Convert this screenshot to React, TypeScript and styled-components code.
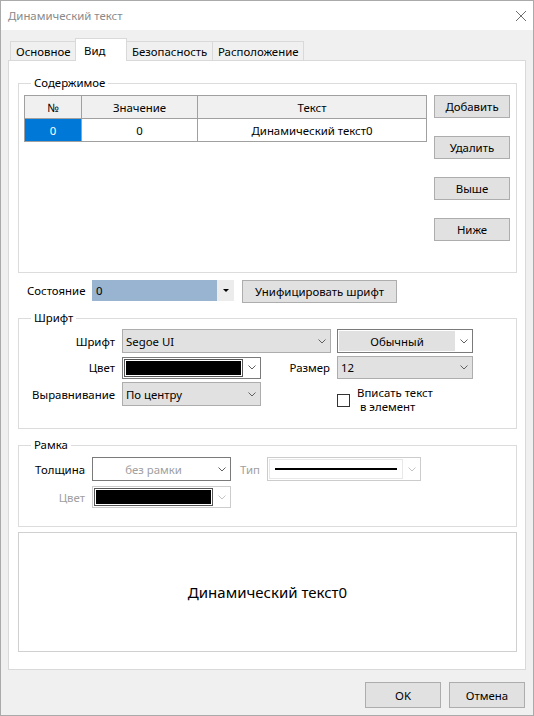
import React from "react";
import styled, { createGlobalStyle } from "styled-components";

const GlobalStyle = createGlobalStyle`
  * {
    box-sizing: border-box;
  }
  html,
  body {
    margin: 0;
    padding: 0;
    background: #ffffff;
  }
  body {
    font-family: "Noto Sans", "Liberation Sans", sans-serif;
    font-size: 11.4px;
    color: #000;
  }
`;

// окно диалога
const Window = styled.div`
  width: 534px;
  height: 716px;
  display: flex;
  flex-direction: column;
  border: 1px solid #aaaaaa;
  background: #f0f0f0;
`;

const TitleBar = styled.div`
  flex-shrink: 0;
  height: 29px;
  display: flex;
  align-items: center;
  justify-content: space-between;
  padding: 0 7px 0 7px;
  background: #ffffff;
  color: #8a8a8a;
`;

const Body = styled.div`
  flex: 1;
  display: flex;
  flex-direction: column;
  padding: 8px 7px 0;
`;

// вкладки
const TabStrip = styled.div`
  display: flex;
  align-items: flex-end;
  height: 22px;
  padding-left: 2px;
`;

const Tab = styled.div<{ $active?: boolean; $w: number }>`
  position: relative;
  z-index: ${(p) => (p.$active ? 1 : 0)};
  width: ${(p) => p.$w}px;
  height: ${(p) => (p.$active ? 23 : 19)}px;
  margin-bottom: ${(p) => (p.$active ? -1 : 0)}px;
  margin-left: -1px;
  padding-left: ${(p) => (p.$active ? 8 : 5)}px;
  display: flex;
  align-items: center;
  border: 1px solid #d9d9d9;
  border-bottom: none;
  background: ${(p) => (p.$active ? "#ffffff" : "#f0f0f0")};
  white-space: nowrap;

  &:first-child {
    margin-left: 0;
  }
`;

const Pane = styled.div`
  height: 610px;
  display: flex;
  flex-direction: column;
  gap: 7px;
  padding: 14px 8px 0 9px;
  background: #ffffff;
  border: 1px solid #d9d9d9;
`;

// рамка группы
const Group = styled.fieldset<{ $h: number; $shift?: number }>`
  height: ${(p) => p.$h}px;
  min-width: 0;
  margin: ${(p) => p.$shift ?? 0}px 0 0;
  padding: 0;
  border: 1px solid #dcdcdc;
`;

const Legend = styled.legend`
  margin-left: 12px;
  padding: 0 3px;
  line-height: 16px;
`;

// содержимое
const ContentRow = styled.div`
  display: flex;
  align-items: flex-start;
  gap: 7px;
  padding: 4px 6px 0 5px;
`;

const TableGrid = styled.div`
  width: 403px;
  display: grid;
  grid-template-columns: 56px 115px 228px;
  grid-auto-rows: 22px;
  gap: 1px;
  background: #a0a0a0;
  border: 1px solid #a0a0a0;
`;

const Cell = styled.div<{ $head?: boolean; $selected?: boolean }>`
  display: flex;
  align-items: center;
  justify-content: center;
  background: ${(p) =>
    p.$selected ? "#0078d7" : p.$head ? "#f0f0f0" : "#ffffff"};
  color: ${(p) => (p.$selected ? "#ffffff" : "#000000")};
  white-space: nowrap;
`;

const SideButtons = styled.div`
  display: flex;
  flex-direction: column;
  gap: 18px;
`;

const Button = styled.button<{ $w: number; $h: number }>`
  width: ${(p) => p.$w}px;
  height: ${(p) => p.$h}px;
  padding: 0;
  border: 1px solid #adadad;
  background: #e1e1e1;
  font: inherit;
  color: #000;
  white-space: nowrap;
`;

// состояние
const StateRow = styled.div`
  display: flex;
  align-items: flex-start;
  height: 23px;
  padding-left: 9px;
`;

const StateLabel = styled.span`
  width: 65px;
  height: 21px;
  display: flex;
  align-items: center;
`;

const StateCombo = styled.div`
  width: 142px;
  height: 21px;
  display: flex;
  margin-right: 8px;
`;

const StateValue = styled.div`
  flex: 1;
  display: flex;
  align-items: center;
  padding-left: 4px;
  background: #99b4d1;
`;

const StateArrow = styled.div`
  width: 17px;
  display: flex;
  align-items: center;
  justify-content: center;
  background: #ececec;

  &::after {
    content: "";
    border-left: 3px solid transparent;
    border-right: 3px solid transparent;
    border-top: 3px solid #000;
  }
`;

// шрифт и рамка
const FontGrid = styled.div`
  display: grid;
  grid-template-columns: 97px 139px 64px 136px;
  grid-template-rows: 24px 23px 24px;
  column-gap: 6px;
  row-gap: 3px;
  padding-top: 3px;
`;

const FrameGrid = styled.div`
  display: grid;
  grid-template-columns: 67px 139px 24px 154px;
  grid-template-rows: 24px 22px;
  column-gap: 6px;
  row-gap: 5px;
  padding-top: 4px;
`;

const FieldLabel = styled.span<{ $muted?: boolean; $left?: boolean }>`
  display: flex;
  align-items: center;
  justify-content: ${(p) => (p.$left ? "flex-start" : "flex-end")};
  padding: ${(p) => (p.$left ? "0 0 0 3px" : "0 1px 0 0")};
  color: ${(p) => (p.$muted ? "#a0a0a0" : "#000000")};
  white-space: nowrap;
`;

const Wide = styled.div`
  grid-column: 2 / span 2;
`;

type Tone = "flat" | "white" | "off";

const ComboBox = styled.div<{ $tone: Tone; $h?: number }>`
  height: ${(p) => (p.$h ? `${p.$h}px` : "100%")};
  align-self: center;
  display: flex;
  align-items: stretch;
  padding: 1px 0 1px 1px;
  border: 1px solid
    ${(p) =>
      p.$tone === "off" ? "#cccccc" : p.$tone === "white" ? "#7a7a7a" : "#adadad"};
  background: ${(p) => (p.$tone === "flat" ? "#e1e1e1" : "#ffffff")};
`;

const ComboValue = styled.span<{ $center?: boolean; $muted?: boolean; $fill?: boolean }>`
  flex: 1;
  display: flex;
  align-items: center;
  justify-content: ${(p) => (p.$center ? "center" : "flex-start")};
  padding-left: ${(p) => (p.$center ? 0 : 2)}px;
  background: ${(p) => (p.$fill ? "#e1e1e1" : "transparent")};
  color: ${(p) => (p.$muted ? "#a0a0a0" : "#000000")};
  white-space: nowrap;
  overflow: hidden;
`;

const Swatch = styled.span`
  flex: 1;
  border: 1px solid #555555;
  box-shadow: inset 0 0 0 1px #ffffff;
  background: #000000;
`;

const LineBox = styled.span`
  flex: 1;
  display: flex;
  align-items: center;
  padding: 0 5px;
  border: 1px solid #e8e8e8;

  &::after {
    content: "";
    flex: 1;
    height: 2px;
    background: #000;
  }
`;

const ChevronSlot = styled.span`
  width: 17px;
  flex-shrink: 0;
  display: flex;
  align-items: center;
  justify-content: center;
`;

const CheckCell = styled.label`
  grid-column: 4;
  align-self: start;
  display: flex;
  align-items: center;
  gap: 7px;
  margin-top: 4px;
`;

const CheckBox = styled.span`
  width: 13px;
  height: 13px;
  border: 1px solid #333333;
  background: #ffffff;
`;

const CheckText = styled.span`
  line-height: 14px;
  white-space: pre;
`;

// предпросмотр
const Preview = styled.div`
  height: 120px;
  margin-top: -2px;
  display: flex;
  align-items: center;
  justify-content: center;
  border: 1px solid #d0d0d0;
  font-size: 15px;
`;

const Footer = styled.div`
  display: flex;
  justify-content: flex-end;
  gap: 8px;
  padding: 12px 1px 0 0;
`;

const Chevron: React.FC<{ off?: boolean }> = ({ off }) => (
  <ChevronSlot>
    <svg width="8" height="5" viewBox="0 0 8 5">
      <path
        d="M0.5 0.5 L4 4 L7.5 0.5"
        fill="none"
        stroke={off ? "#c4c4c4" : "#606060"}
        strokeWidth="1"
      />
    </svg>
  </ChevronSlot>
);

const CloseIcon = () => (
  <svg width="10" height="10" viewBox="0 0 10 10">
    <path d="M0 0 L10 10 M10 0 L0 10" stroke="#6e6e6e" strokeWidth="1" />
  </svg>
);

const tabs = [
  { title: "Основное", w: 66 },
  { title: "Вид", w: 52, active: true },
  { title: "Безопасность", w: 87 },
  { title: "Расположение", w: 92 },
];

const App: React.FC = () => {
  return (
    <>
      <GlobalStyle />
      <Window>
        <TitleBar>
          <span>Динамический текст</span>
          <CloseIcon />
        </TitleBar>
        <Body>
          <TabStrip>
            {tabs.map((t) => (
              <Tab key={t.title} $w={t.w} $active={t.active}>
                {t.title}
              </Tab>
            ))}
          </TabStrip>
          <Pane>
            <Group $h={198}>
              <Legend>Содержимое</Legend>
              <ContentRow>
                <TableGrid>
                  <Cell $head>№</Cell>
                  <Cell $head>Значение</Cell>
                  <Cell $head>Текст</Cell>
                  <Cell $selected>0</Cell>
                  <Cell>0</Cell>
                  <Cell>Динамический текст0</Cell>
                </TableGrid>
                <SideButtons>
                  <Button $w={76} $h={23}>Добавить</Button>
                  <Button $w={76} $h={23}>Удалить</Button>
                  <Button $w={76} $h={23}>Выше</Button>
                  <Button $w={76} $h={23}>Ниже</Button>
                </SideButtons>
              </ContentRow>
            </Group>

            <StateRow>
              <StateLabel>Состояние</StateLabel>
              <StateCombo>
                <StateValue>0</StateValue>
                <StateArrow />
              </StateCombo>
              <Button $w={155} $h={23}>Унифицировать шрифт</Button>
            </StateRow>

            <Group $h={119}>
              <Legend>Шрифт</Legend>
              <FontGrid>
                <FieldLabel>Шрифт</FieldLabel>
                <Wide>
                  <ComboBox $tone="flat">
                    <ComboValue>Segoe UI</ComboValue>
                    <Chevron />
                  </ComboBox>
                </Wide>
                <ComboBox $tone="white">
                  <ComboValue $center $fill>Обычный</ComboValue>
                  <Chevron />
                </ComboBox>

                <FieldLabel>Цвет</FieldLabel>
                <ComboBox $tone="white" $h={22}>
                  <Swatch />
                  <Chevron />
                </ComboBox>
                <FieldLabel>Размер</FieldLabel>
                <ComboBox $tone="flat">
                  <ComboValue>12</ComboValue>
                  <Chevron />
                </ComboBox>

                <FieldLabel>Выравнивание</FieldLabel>
                <ComboBox $tone="flat" $h={24}>
                  <ComboValue>По центру</ComboValue>
                  <Chevron />
                </ComboBox>
                <CheckCell>
                  <CheckBox />
                  <CheckText>{"Вписать текст\n в элемент"}</CheckText>
                </CheckCell>
              </FontGrid>
            </Group>

            <Group $h={90} $shift={1}>
              <Legend>Рамка</Legend>
              <FrameGrid>
                <FieldLabel>Толщина</FieldLabel>
                <ComboBox $tone="white">
                  <ComboValue $center $muted>без рамки</ComboValue>
                  <Chevron />
                </ComboBox>
                <FieldLabel $muted $left>Тип</FieldLabel>
                <ComboBox $tone="off">
                  <LineBox />
                  <Chevron off />
                </ComboBox>

                <FieldLabel $muted>Цвет</FieldLabel>
                <ComboBox $tone="off">
                  <Swatch />
                  <Chevron off />
                </ComboBox>
              </FrameGrid>
            </Group>

            <Preview>Динамический текст0</Preview>
          </Pane>
          <Footer>
            <Button $w={76} $h={26}>OK</Button>
            <Button $w={76} $h={26}>Отмена</Button>
          </Footer>
        </Body>
      </Window>
    </>
  );
};

export default App;
